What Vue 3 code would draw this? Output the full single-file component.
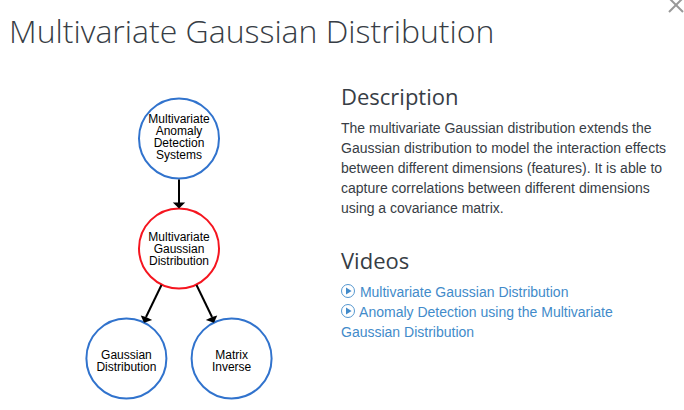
<script setup>
const nodes = [
  { id: 'systems', cx: 179, cy: 138.4, color: '#3173cd', lines: ['Multivariate', 'Anomaly', 'Detection', 'Systems'], top: 123 },
  { id: 'multivariate', cx: 179, cy: 248.4, color: '#f5151f', lines: ['Multivariate', 'Gaussian', 'Distribution'], top: 241 },
  { id: 'gaussian', cx: 126.4, cy: 358.4, color: '#3173cd', lines: ['Gaussian', 'Distribution'], top: 359 },
  { id: 'inverse', cx: 231.6, cy: 358.4, color: '#3173cd', lines: ['Matrix', 'Inverse'], top: 359 },
]
const edges = [
  { line: 'M179 179.4V205', head: 'M172.8 202.4H185.2L179 208.4Z' },
  { line: 'M161.5 285L146 317', head: 'M140.8 315.4L146 317L152.2 320L144 322.8Z' },
  { line: 'M196.5 285L212 317', head: 'M217.2 315.4L212 317L205.8 320L214 322.8Z' },
]
const videos = ['Multivariate Gaussian Distribution', 'Anomaly Detection using the Multivariate Gaussian Distribution']
</script>

<template>
  <main class="dialog">
    <header>
      <h1>Multivariate Gaussian Distribution</h1>
      <button class="close" type="button" aria-label="Close">
        <svg width="16" height="16" viewBox="0 0 16 16"><path d="M1 1L15 15M15 1L1 15" stroke="#999" stroke-width="2" /></svg>
      </button>
    </header>
    <div class="content">
      <svg class="graph" width="200" height="312" viewBox="80 92 200 312">
        <g v-for="node in nodes" :key="node.id">
          <circle :cx="node.cx" :cy="node.cy" r="40" fill="#fff" :stroke="node.color" stroke-width="2" />
          <text v-for="(line, i) in node.lines" :key="line" :x="node.cx" :y="node.top + i * 12">{{ line }}</text>
        </g>
        <g v-for="edge in edges" :key="edge.line">
          <path :d="edge.line" stroke="#000" stroke-width="2" />
          <path :d="edge.head" />
        </g>
      </svg>
      <div class="details">
        <section>
          <h2>Description</h2>
          <p>The multivariate Gaussian distribution extends the Gaussian distribution to model the interaction effects between different dimensions (features). It is able to capture correlations between different dimensions using a covariance matrix.</p>
        </section>
        <section>
          <h2>Videos</h2>
          <ul>
            <li v-for="video in videos" :key="video">
              <a href="#"><svg class="play" width="14" height="14" viewBox="0 0 14 14"><circle cx="7" cy="7" r="6.5" fill="none" stroke="currentColor" stroke-width="0.9" /><path d="M5 3.6L10.6 7L5 10.4Z" fill="currentColor" /></svg> {{ video }}</a>
            </li>
          </ul>
        </section>
      </div>
    </div>
  </main>
</template>

<style>
body { background: #fff; }
</style>

<style scoped>
.dialog { color: #373d45; font: 14px/20px "Liberation Sans", Arial, sans-serif; }
header { display: flex; justify-content: space-between; align-items: flex-start; padding-left: 9px; }
h1, h2 { margin: 0; font-family: "Open Sans", sans-serif; }
h1 { padding-top: 9px; font-size: 32px; line-height: 44px; font-weight: 300; }
.close { display: flex; margin-top: -3px; padding: 0; border: 0; background: none; cursor: pointer; }
.content { display: grid; grid-template-columns: 1fr 1fr; padding-top: 28px; }
.graph { display: block; margin: 11px 0 0 80px; }
.graph text { font-size: 12px; text-anchor: middle; fill: #000; }
.details { padding-right: 12px; margin-left: -1px; }
h2 { font-size: 22px; line-height: 30px; font-weight: 400; }
p { margin: 7px 0 27px; }
ul { list-style: none; margin: 7px 0 0; padding: 0; }
a { color: #428bca; text-decoration: none; }
.play { margin-right: 1px; vertical-align: -1px; }
</style>
